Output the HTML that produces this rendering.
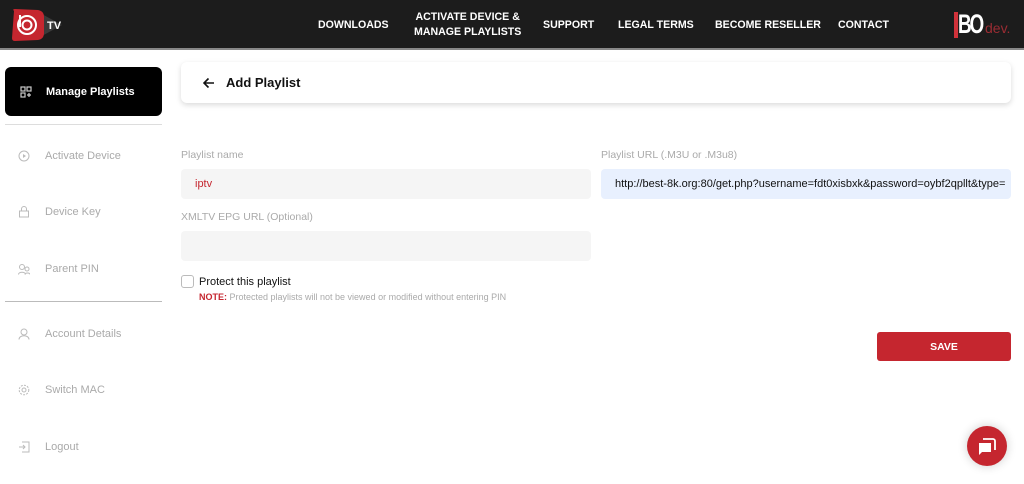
<!DOCTYPE html><html><head><style>
*{margin:0;padding:0;box-sizing:border-box}
body{width:1024px;height:484px;background:#fff;font-family:"Liberation Sans",sans-serif;position:relative;overflow:hidden}
.hdr{position:absolute;left:0;top:0;width:1024px;height:50px;background:#1c1c1c;border-bottom:2px solid #888}
.nav{position:absolute;top:0;height:50px;display:flex;align-items:center;color:#fff;font-weight:bold;font-size:10.6px;text-align:center;line-height:15px}
.side{position:absolute;left:5px;width:157px}
.item{position:absolute;left:18px;color:#aaa;font-size:11px;display:flex;align-items:center}
.item svg{margin-right:15px}
.lbl{position:absolute;color:#aaa;font-size:10.5px}
.inp{position:absolute;background:#f5f5f5;border-radius:4px;height:30px;font-size:11px;display:flex;align-items:center;padding-left:14px}
</style></head><body>
<div class="hdr">
<svg style="position:absolute;left:10px;top:7px" width="56" height="36" viewBox="0 0 56 36"><path d="M30 6 L52 18 L30 30Z" fill="#3a3a3a"/><path d="M4 4 Q2 2 5 2 L28 3 Q34 4 34 10 L34 26 Q34 32 28 33 L5 34 Q2 34 2 31Z" fill="#c5262f"/><circle cx="17" cy="18" r="9" fill="none" stroke="#fff" stroke-width="2"/><circle cx="17" cy="18" r="4.5" fill="none" stroke="#fff" stroke-width="2"/><line x1="10" y1="8" x2="10" y2="20" stroke="#fff" stroke-width="2"/><text x="37" y="22" fill="#fff" font-size="11" font-weight="bold" font-family="Liberation Sans">TV</text></svg>
<div class="nav" style="left:318px">DOWNLOADS</div>
<div class="nav" style="left:414px">ACTIVATE DEVICE &amp;<br>MANAGE PLAYLISTS</div>
<div class="nav" style="left:543px">SUPPORT</div>
<div class="nav" style="left:618px">LEGAL TERMS</div>
<div class="nav" style="left:715px">BECOME RESELLER</div>
<div class="nav" style="left:838px">CONTACT</div>
<div style="position:absolute;left:954px;top:12px;width:4px;height:26px;background:#d0323a"></div>
<div style="position:absolute;left:958px;top:9px;color:#fff;font-size:27px;font-weight:bold;letter-spacing:-3px;transform:scaleX(.7);transform-origin:left">BO</div>
<div style="position:absolute;left:985px;top:20px;color:#9a2c33;font-size:14px">dev.</div>
</div>
<div class="side" style="top:67px;height:49px;background:#000;border-radius:6px;color:#fff;font-weight:bold;font-size:11px;display:flex;align-items:center;padding-left:15px">
<svg width="12" height="12" viewBox="0 0 12 12" style="margin-right:14px" fill="none" stroke="#ccc" stroke-width="1.2"><rect x="1" y="1" width="4" height="4"/><rect x="7" y="1" width="4" height="4"/><rect x="1" y="7" width="4" height="4"/><path d="M9 7v4M7 9h4"/></svg>Manage Playlists</div>
<div class="side" style="top:124px;border-top:1px solid #ddd"></div>
<div class="item" style="top:150px"><svg width="12" height="12"><circle cx="6" cy="6" r="5" fill="none" stroke="#bbb"/><path d="M5 4l3 2-3 2z" fill="#bbb"/></svg>Activate Device</div>
<div class="item" style="top:206px"><svg width="12" height="12" fill="none" stroke="#bbb"><rect x="1.5" y="5" width="9" height="6"/><path d="M3.5 5V3a2.5 2.5 0 015 0v2"/></svg>Device Key</div>
<div class="item" style="top:263px"><svg width="12" height="12" fill="none" stroke="#bbb"><circle cx="4" cy="4" r="2.5"/><circle cx="9" cy="6" r="2"/><path d="M0.5 11.5c0-3 7-3 7 0M7 11.5c0-2 5-2 5 0"/></svg>Parent PIN</div>
<div class="side" style="top:301px;border-top:1px solid #bbb"></div>
<div class="item" style="top:328px"><svg width="12" height="12" fill="none" stroke="#bbb"><circle cx="6" cy="4" r="3"/><path d="M1 11.5c0-5 10-5 10 0"/></svg>Account Details</div>
<div class="item" style="top:384px"><svg width="12" height="12" fill="none" stroke="#bbb"><circle cx="6" cy="6" r="2"/><circle cx="6" cy="6" r="4.8" stroke-dasharray="2 1.2"/></svg>Switch MAC</div>
<div class="item" style="top:441px"><svg width="12" height="12" fill="none" stroke="#bbb"><path d="M4 1h7v10H4M1 6h6M5 4l2 2-2 2"/></svg>Logout</div>
<div style="position:absolute;left:181px;top:62px;width:830px;height:41px;background:#fff;border-radius:6px;box-shadow:0 2px 6px rgba(0,0,0,.15);display:flex;align-items:center;padding-left:22px;font-weight:bold;font-size:13px;color:#111">
<svg width="12" height="12" style="margin-right:11px" fill="none" stroke="#111" stroke-width="1.6"><path d="M11 6H1M5.5 1.5L1 6l4.5 4.5"/></svg>Add Playlist</div>
<div class="lbl" style="left:181px;top:149px">Playlist name</div>
<div class="inp" style="left:181px;top:169px;width:410px;color:#c5262f">iptv</div>
<div class="lbl" style="left:181px;top:211px">XMLTV EPG URL (Optional)</div>
<div class="inp" style="left:181px;top:231px;width:410px"></div>
<div style="position:absolute;left:181px;top:275px;width:13px;height:13px;border:1px solid #bbb;border-radius:3px"></div>
<div style="position:absolute;left:199px;top:276px;font-size:11px;color:#111">Protect this playlist</div>
<div style="position:absolute;left:199px;top:292px;font-size:9px;color:#aaa"><b style="color:#c5262f">NOTE:</b> Protected playlists will not be viewed or modified without entering PIN</div>
<div class="lbl" style="left:601px;top:149px">Playlist URL (.M3U or .M3u8)</div>
<div class="inp" style="left:601px;top:169px;width:410px;background:#e8f0fe;color:#111;white-space:nowrap;overflow:hidden">http://best-8k.org:80/get.php?username=fdt0xisbxk&amp;password=oybf2qpllt&amp;type=</div>
<div style="position:absolute;left:877px;top:332px;width:134px;height:29px;background:#c5262f;border-radius:3px;color:#fff;font-weight:bold;font-size:10.5px;display:flex;align-items:center;justify-content:center">SAVE</div>
<div style="position:absolute;left:967px;top:426px;width:40px;height:40px;border-radius:50%;background:#c5262f;box-shadow:0 0 10px rgba(0,0,0,.2)">
<svg width="40" height="40" viewBox="0 0 40 40"><path d="M16 13h10a2 2 0 012 2v9" fill="none" stroke="#fff" stroke-width="1.8"/><path d="M12 17h12v9h-9l-3 3z" fill="#fff"/></svg></div>
</body></html>
